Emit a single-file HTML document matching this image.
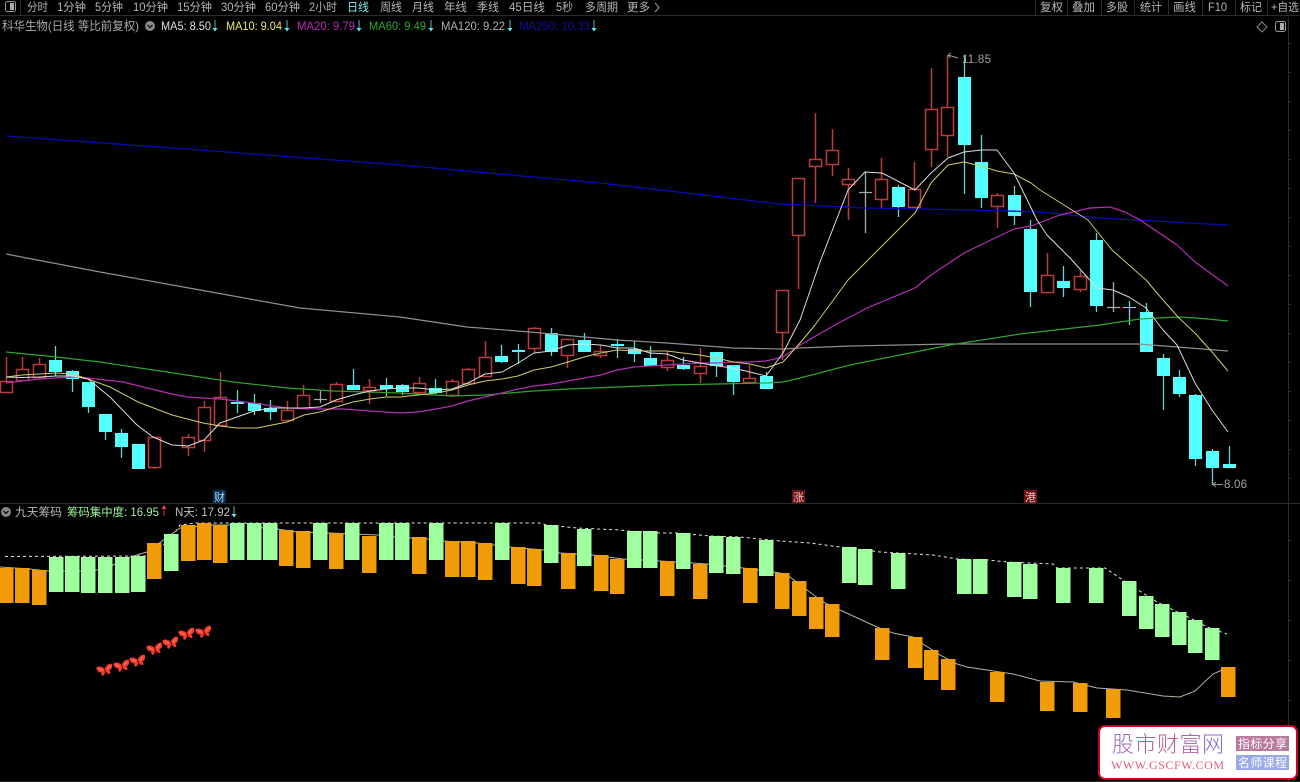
<!DOCTYPE html>
<html><head><meta charset="utf-8"><style>
html,body{margin:0;padding:0;background:#000;width:1300px;height:782px;overflow:hidden}
svg{display:block}
text{font-family:"Liberation Sans","Noto Sans CJK SC",sans-serif;font-size:11.5px}
</style></head><body>
<svg width="1300" height="782" viewBox="0 0 1300 782" xmlns="http://www.w3.org/2000/svg">
<defs>
<linearGradient id="g" x1="0" x2="1" y1="0" y2="0"><stop offset="0" stop-color="#8a70c8"/><stop offset=".4" stop-color="#c05a90"/><stop offset=".7" stop-color="#b060a8"/><stop offset="1" stop-color="#7a70d0"/></linearGradient>
<g id="bf"><path d="M0-1C-2-5-7-6-8-4C-8-1-7 1-4 1.500C-5 3-5 5-3.500 5C-2 5-1 3 0 1.500C1 3 2 5 3.500 5C5 5 5 3 4 1.500C7 1 8-1 8-4C7-6 2-5 0-1Z" fill="#f23c2c"/><path d="M-6-3L-2 0M6-3L2 0" stroke="#ff9080" stroke-width=".8"/><path d="M0-1V3" stroke="#600" stroke-width="1"/></g>
</defs>
<rect width="1300" height="782" fill="#000"/>

<!-- frame lines -->
<path d="M0 15.500H1300M0 503.500H1300M0 781.500H1300M1288.500 17V781M20.500 0V15M1035.500 0V15M1067.500 0V15M1101.500 0V15M1134.500 0V15M1168.500 0V15M1202.500 0V15M1235.500 0V15M1267.500 0V15" stroke="#2c2c2c" fill="none"/>
<path d="M1288 43.500h3M1288 72.500h3M1288 101.500h3M1288 130.500h3M1288 159.500h3M1288 188.500h3M1288 217.500h3M1288 246.500h3M1288 275.500h3M1288 304.500h3M1288 333.500h3M1288 362.500h3M1288 391.500h3M1288 420.500h3M1288 449.500h3M1288 478.500h3M1288 540.500h3M1288 580.500h3M1288 620.500h3M1288 660.500h3M1288 700.500h3" stroke="#333"/>

<!-- top-left icon -->
<rect x="5.500" y="1.500" width="10" height="10" rx="2" fill="none" stroke="#999"/><rect x="10" y="3" width="4" height="7" fill="#aaa"/>

<!-- tabs -->
<g fill="#b4b4b4" style="font-size:11.500px">
<text x="27" y="11" textLength="21" lengthAdjust="spacingAndGlyphs">分时</text>
<text x="57" y="11" textLength="29" lengthAdjust="spacingAndGlyphs">1分钟</text>
<text x="95" y="11" textLength="28" lengthAdjust="spacingAndGlyphs">5分钟</text>
<text x="133" y="11" textLength="35" lengthAdjust="spacingAndGlyphs">10分钟</text>
<text x="177" y="11" textLength="35" lengthAdjust="spacingAndGlyphs">15分钟</text>
<text x="221" y="11" textLength="35" lengthAdjust="spacingAndGlyphs">30分钟</text>
<text x="265" y="11" textLength="35" lengthAdjust="spacingAndGlyphs">60分钟</text>
<text x="309" y="11" textLength="28" lengthAdjust="spacingAndGlyphs">2小时</text>
<text x="347" y="11" textLength="22" fill="#7fe6e6" lengthAdjust="spacingAndGlyphs">日线</text>
<text x="380" y="11" textLength="22" lengthAdjust="spacingAndGlyphs">周线</text>
<text x="412" y="11" textLength="22" lengthAdjust="spacingAndGlyphs">月线</text>
<text x="444" y="11" textLength="23" lengthAdjust="spacingAndGlyphs">年线</text>
<text x="477" y="11" textLength="22" lengthAdjust="spacingAndGlyphs">季线</text>
<text x="509" y="11" textLength="36" lengthAdjust="spacingAndGlyphs">45日线</text>
<text x="556" y="11" textLength="17" lengthAdjust="spacingAndGlyphs">5秒</text>
<text x="585" y="11" textLength="33" lengthAdjust="spacingAndGlyphs">多周期</text>
<text x="627" y="11" textLength="23" lengthAdjust="spacingAndGlyphs">更多</text>
<text x="1040" y="11" textLength="23" lengthAdjust="spacingAndGlyphs">复权</text>
<text x="1072" y="11" textLength="23" lengthAdjust="spacingAndGlyphs">叠加</text>
<text x="1106" y="11" textLength="22" lengthAdjust="spacingAndGlyphs">多股</text>
<text x="1140" y="11" textLength="22" lengthAdjust="spacingAndGlyphs">统计</text>
<text x="1173" y="11" textLength="23" lengthAdjust="spacingAndGlyphs">画线</text>
<text x="1208" y="11" textLength="19" lengthAdjust="spacingAndGlyphs">F10</text>
<text x="1240" y="11" textLength="22" lengthAdjust="spacingAndGlyphs">标记</text>
<text x="1271" y="11" textLength="28" lengthAdjust="spacingAndGlyphs">+自选</text>
</g>
<path d="M655 3L659 7.500L655 12" fill="none" stroke="#999"/>

<!-- title row -->
<text x="2" y="30" textLength="137" fill="#aaa" lengthAdjust="spacingAndGlyphs" style="font-size:12px">科华生物(日线 等比前复权)</text>
<circle cx="150" cy="26" r="5" fill="#888"/><path d="M147.500 25L150 27.500L152.500 25" fill="none" stroke="#111" stroke-width="1.300"/>
<text x="161" y="30" textLength="50" fill="#e0e0e0" lengthAdjust="spacingAndGlyphs">MA5: 8.50</text>
<text x="226" y="30" textLength="56" fill="#e8e878" lengthAdjust="spacingAndGlyphs">MA10: 9.04</text>
<text x="297" y="30" textLength="58" fill="#b82cb8" lengthAdjust="spacingAndGlyphs">MA20: 9.79</text>
<text x="369" y="30" textLength="57" fill="#2ea82e" lengthAdjust="spacingAndGlyphs">MA60: 9.49</text>
<text x="441" y="30" textLength="64" fill="#b0b0b0" lengthAdjust="spacingAndGlyphs">MA120: 9.22</text>
<text x="519" y="30" textLength="71" fill="#0f0fa0" lengthAdjust="spacingAndGlyphs">MA250: 10.33</text>
<path d="M215 20V29M287 20V29M359 20V29M431 20V29M510 20V29M594 20V29" fill="none" stroke="#58b8c0" stroke-width="1"/>
<path d="M212.500 28h5L215 31.500ZM284.500 28h5L287 31.500ZM356.500 28h5L359 31.500ZM428.500 28h5L431 31.500ZM507.500 28h5L510 31.500ZM591.500 28h5L594 31.500Z" fill="#5fe8f4"/>
<path d="M1262 22L1267 27L1262 32L1257 27Z" fill="none" stroke="#888"/>
<rect x="1275.500" y="21.500" width="10" height="10" rx="2" fill="none" stroke="#999"/><rect x="1280" y="23" width="4" height="7" fill="#aaa"/>

<!-- candles: wicks -->
<path fill="none" stroke="#b83e3e" stroke-width="1.500" d="M6.500 357V381M22.500 357V369M39.500 358V364M154.500 467V469M188.500 434V437M188.500 447V456M204.500 401V407M204.500 440V452M220.500 372V397M287.500 401V410M303.500 385V395M336.500 382V384M336.500 401V402M369.500 379V387M369.500 390V404M419.500 377V383M452.500 379V381M452.500 395V397M468.500 368V369M485.500 341V357M534.500 327V328M534.500 348V353M567.500 355V368M600.500 345V351M600.500 355V358M667.500 351V360M667.500 367V371M700.500 348V366M700.500 373V383M749.500 365V378M782.500 332V360M798.500 235V289M815.500 113V159M815.500 166V203M832.500 129V150M832.500 164V176M848.500 168V179M848.500 184V220M881.500 158V179M881.500 199V208M914.500 162V189M914.500 207V208M931.500 68V109M931.500 149V167M947.500 55V107M947.500 135V157M997.500 193V195M997.500 206V228M1047.500 253V275M1080.500 271V276M1080.500 289V292"/>
<path fill="none" stroke="#6fd2d2" stroke-width="1.300" d="M55.500 346V376M72.500 370V392M88.500 407V413M105.500 432V440M121.500 429V458M237.500 390V413M254.500 394V415M270.500 400V420M353.500 369V390M386.500 378V396M402.500 384V395M435.500 379V394M501.500 345V363M518.500 344V364M551.500 328V356M584.500 333V352M617.500 339V358M634.500 341V362M650.500 346V366M683.500 357V370M716.500 352V377M733.500 382V395M766.500 372V389M898.500 185V217M964.500 55V194M981.500 135V208M1014.500 186V225M1030.500 220V307M1063.500 266V297M1096.500 233V312M1129.500 301V325M1146.500 303V352M1163.500 354V410M1179.500 370V397M1195.500 394V466M1212.500 449V485M1229.500 446V468"/>
<path fill="none" stroke="#a8a8a8" stroke-width="1.300" d="M320.500 390V403M314 399.500H327M865.500 172V233M859 192.500H872M1113.500 282V312M1107 307.500H1120"/>
<!-- red bodies -->
<path fill="#000" stroke="#b83e3e" stroke-width="1.500" d="M0.500 381.500h12v11h-12zM16.500 369.500h12v11h-12zM33.500 364.500h12v13h-12zM148.500 437.500h12v30h-12zM182.500 437.500h12v10h-12zM198.500 407.500h12v33h-12zM214.500 397.500h12v28h-12zM281.500 410.500h12v10h-12zM297.500 395.500h12v13h-12zM330.500 384.500h12v17h-12zM363.500 387.500h12v3h-12zM413.500 383.500h12v9h-12zM446.500 381.500h12v14h-12zM462.500 369.500h12v14h-12zM479.500 357.500h12v19h-12zM528.500 328.500h12v20h-12zM561.500 339.500h12v16h-12zM594.500 351.500h12v4h-12zM661.500 360.500h12v7h-12zM694.500 366.500h12v7h-12zM743.500 378.500h12v4h-12zM776.500 290.500h12v42h-12zM792.500 178.500h12v57h-12zM809.500 159.500h12v7h-12zM826.500 150.500h12v14h-12zM842.500 179.500h12v5h-12zM875.500 179.500h12v20h-12zM908.500 189.500h12v18h-12zM925.500 109.500h12v40h-12zM941.500 107.500h12v28h-12zM991.500 195.500h12v11h-12zM1041.500 275.500h12v17h-12zM1074.500 276.500h12v13h-12z"/>
<!-- cyan bodies -->
<path fill="#54ffff" d="M49 360h13v12h-13zM66 371h13v8h-13zM82 382h13v25h-13zM99 414h13v18h-13zM115 433h13v14h-13zM132 444h13v25h-13zM231 402h13v2h-13zM248 403h13v8h-13zM264 408h13v4h-13zM347 385h13v5h-13zM380 385h13v4h-13zM396 385h13v7h-13zM429 388h13v5h-13zM495 356h13v6h-13zM512 350h13v2h-13zM545 333h13v19h-13zM578 340h13v12h-13zM611 344h13v2h-13zM628 349h13v5h-13zM644 358h13v8h-13zM677 365h13v4h-13zM710 352h13v14h-13zM727 365h13v17h-13zM760 376h13v13h-13zM892 187h13v20h-13zM958 77h13v68h-13zM975 162h13v36h-13zM1008 195h13v21h-13zM1024 229h13v63h-13zM1057 281h13v7h-13zM1090 240h13v66h-13zM1123 307h13v1h-13zM1140 312h13v40h-13zM1157 358h13v18h-13zM1173 377h13v17h-13zM1189 395h13v64h-13zM1206 451h13v17h-13zM1223 464h13v4h-13z"/>

<!-- moving averages -->
<g fill="none" stroke-width="1" stroke-linejoin="round">
<polyline stroke="#0a0ab4" stroke-width="1.300" points="6,136 200,150 400,165 600,183 780,204 865,208 973,210 1040,212 1100,218 1207,224 1228,225"/>
<polyline stroke="#8f8f8f" stroke-width="1.200" points="6,254 100,272 200,290 300,308 400,317 467,327 530,332 617,340 667,343 733,348 783,349 800,348 850,346 950,344 1020,344 1138,344 1177,347 1228,351"/>
<polyline stroke="#2fa52f" stroke-width="1.200" points="6,352 56,357 100,362 160,371 233,382 287,388 333,391 367,392 400,393 418,394 452,396 485,395 534,391 568,389 617,387 667,385 717,384 766,383 783,382 800,378 850,365 900,355 950,345 1020,334 1100,325 1140,319 1177,317 1197,318 1228,321"/>
<polyline stroke="#b030b0" stroke-width="1.200" points="6,383 22,381 39,379 56,378 72,377 88,378 123,382 147,388 172,394 187,397 220,399 253,403 287,408 320,409 343,409 370,411 400,413 418,412 436,409 452,406 468,401 485,397 502,393 518,389 534,386 551,384 568,381 584,378 601,375 617,370 634,367 650,366 667,365 683,364 700,363 717,363 733,362 750,362 766,361 783,357 800,345 835,325 867,308 915,288 931,275 964,253 997,237 1014,229 1031,226 1060,215 1090,208 1110,207 1125,212 1140,220 1177,245 1195,262 1228,286"/>
<polyline stroke="#d0cc68" points="6,377 22,375 39,374 56,373 72,374 88,379 110,387 138,402 172,415 203,423 220,426 237,428 257,428 287,422 304,415 320,412 336,407 353,402 370,399 386,397 400,397 418,395 436,393 452,390 468,385 485,381 502,379 518,376 534,370 551,367 568,362 584,357 601,353 617,350 634,351 650,351 667,351 683,353 700,355 717,358 733,362 750,364 766,368 783,362 800,343 815,325 848,280 880,248 915,213 931,183 948,165 964,162 981,166 997,171 1014,174 1031,183 1040,190 1088,220 1112,250 1146,280 1163,300 1179,318 1195,333 1212,352 1228,371"/>
<polyline stroke="#dcdcdc" points="6,377 22,377.5 39,377 56,376 72,376 88,379 110,397 137,425 153,437 172,445 188,446 204,440 220,423 254,411 270,408 287,408 303,408 320,407 336,400 353,395 370,391 386,389 400,388 418,388 436,390 452,389 468,383 485,374 502,372 518,363 534,353 551,351 568,345 584,344 601,345 617,348 634,348 650,353 667,354 683,360 700,363 717,366 733,368 750,372 766,376 783,353 800,320 820,262 848,190 865,172 882,173 915,190 931,173 948,158 964,152 981,150 997,150 1014,173 1037,220 1047,235 1070,258 1097,288 1113,290 1129,297 1146,308 1163,330 1177,345 1195,383 1212,410 1228,432"/>
</g>

<!-- price labels -->
<text x="962" y="63" textLength="29" fill="#a0a0a0">11.85</text>
<path d="M948 55L958 58M948 55L951 53M948 55L950 58" stroke="#999" fill="none"/>
<text x="1224" y="488" textLength="23" fill="#a0a0a0">8.06</text>
<path d="M1213 484.500H1223M1213 484.500L1216 482M1213 484.500L1216 487" stroke="#999" fill="none"/>

<!-- markers -->
<rect x="213" y="490" width="13" height="13" fill="#0a2a55"/><text x="214" y="501" fill="#9fe0f0" style="font-size:11px">财</text>
<rect x="792" y="490" width="13" height="13" fill="#6a1010"/><text x="793" y="501" fill="#f0c0c0" style="font-size:11px">涨</text>
<rect x="1024" y="490" width="13" height="13" fill="#6a1010"/><text x="1025" y="501" fill="#f0c0c0" style="font-size:11px">港</text>

<!-- indicator title -->
<circle cx="6" cy="512" r="5" fill="#888"/><path d="M3.500 511L6 513.500L8.500 511" fill="none" stroke="#111" stroke-width="1.300"/>
<text x="15" y="516" textLength="47" fill="#b8b8b8" lengthAdjust="spacingAndGlyphs">九天筹码</text>
<text x="67" y="516" textLength="92" fill="#a0f0a0" lengthAdjust="spacingAndGlyphs">筹码集中度: 16.95</text>
<path d="M164 507V516" fill="none" stroke="#c04030" stroke-width="1"/><path d="M161.500 509h5L164 505Z" fill="#f04030"/>
<text x="175" y="516" textLength="55" fill="#c0c0c0" lengthAdjust="spacingAndGlyphs">N天: 17.92</text>
<path d="M234 506V515" fill="none" stroke="#58b8c0" stroke-width="1"/><path d="M231.500 514h5L234 517.500Z" fill="#5fe8f4"/>

<!-- indicator lines -->
<polyline fill="none" stroke="#e4e4e4" stroke-dasharray="3 3" points="5,556.500 148,556 170,540 180,525 195,523 540,523 547,525 577,528 620,530 628,531 660,533 677,533 710,536 740,537 760,539 780,541 810,543 840,547 857,549 880,552 933,555 957,559 988,560 1007,562 1053,564 1057,568 1105,568 1123,580 1138,590 1157,602 1173,610 1190,618 1207,627 1227,634"/>
<polyline fill="none" stroke="#a8b8a0" points="0,567 30,569 47,571 80,571 97,570 113,565 130,557 147,552 180,528 213,525 233,525 245,523 263,528 277,529 297,532 330,533 378,535 395,537 427,539 443,541 477,543 510,547 543,550 560,553 593,555 623,559 660,561 693,563 707,564 743,568 773,572 780,573 790,577 807,590 823,602 840,610 877,627 893,633 913,637 923,644 940,655 957,664 967,667 1013,674 1040,681 1073,682 1097,688 1127,690 1163,696 1180,697 1195,691 1213,674 1222,670"/>

<!-- indicator bars -->
<path fill="#f09c08" d="M-1 568h14.500v35h-14.500zM15 568h14.500v35h-14.500zM32 570h14.500v35h-14.500zM147 543h14.500v36h-14.500zM181 525h14.500v36h-14.500zM197 523h14.500v37h-14.500zM213 525h14.500v38h-14.500zM279 530h14.500v36h-14.500zM296 531h14.500v37h-14.500zM329 533h14.500v36h-14.500zM362 536h14.500v37h-14.500zM412 537h14.500v37h-14.500zM445 541h14.500v36h-14.500zM461 541h14.500v36h-14.500zM478 543h14.500v37h-14.500zM511 547h14.500v37h-14.500zM527 549h14.500v37h-14.500zM561 553h14.500v36h-14.500zM594 555h14.500v36h-14.500zM610 559h14.500v35h-14.500zM660 561h14.500v35h-14.500zM693 564h14.500v35h-14.500zM743 568h14.500v35h-14.500zM775 573h14.500v36h-14.500zM792 581h14.500v35h-14.500zM809 597h14.500v32h-14.500zM825 604h14.500v33h-14.500zM875 628h14.500v32h-14.500zM908 637h14.500v31h-14.500zM924 650h14.500v30h-14.500zM941 659h14.500v31h-14.500zM990 672h14.500v30h-14.500zM1040 682h14.500v29h-14.500zM1073 683h14.500v29h-14.500zM1106 689h14.500v29h-14.500zM1221 667h14.500v30h-14.500z"/>
<path fill="#9fff9f" d="M49 557h14.500v35h-14.500zM65 556h14.500v36h-14.500zM81 557h14.500v36h-14.500zM98 557h14.500v36h-14.500zM115 557h14.500v36h-14.500zM131 556h14.500v36h-14.500zM164 534h14.500v37h-14.500zM230 523h14.500v37h-14.500zM247 523h14.500v37h-14.500zM263 523h14.500v37h-14.500zM313 523h14.500v37h-14.500zM345 523h14.500v37h-14.500zM379 523h14.500v37h-14.500zM395 523h14.500v37h-14.500zM429 523h14.500v37h-14.500zM495 523h14.500v37h-14.500zM544 525h14.500v38h-14.500zM577 529h14.500v37h-14.500zM627 531h14.500v37h-14.500zM643 531h14.500v37h-14.500zM676 533h14.500v36h-14.500zM709 536h14.500v37h-14.500zM726 537h14.500v37h-14.500zM759 540h14.500v36h-14.500zM842 547h14.500v36h-14.500zM858 549h14.500v36h-14.500zM891 553h14.500v36h-14.500zM957 559h14.500v35h-14.500zM973 559h14.500v35h-14.500zM1007 562h14.500v35h-14.500zM1023 564h14.500v35h-14.500zM1056 568h14.500v35h-14.500zM1089 568h14.500v35h-14.500zM1122 581h14.500v35h-14.500zM1139 596h14.500v33h-14.500zM1155 604h14.500v33h-14.500zM1172 612h14.500v33h-14.500zM1188 620h14.500v33h-14.500zM1205 628h14.500v32h-14.500z"/>

<!-- butterflies -->
<use href="#bf" transform="translate(105 670) rotate(-14)"/>
<use href="#bf" transform="translate(122 666) rotate(-14)"/>
<use href="#bf" transform="translate(138 661) rotate(-14)"/>
<use href="#bf" transform="translate(155 649) rotate(-14)"/>
<use href="#bf" transform="translate(171 643) rotate(-14)"/>
<use href="#bf" transform="translate(187 634) rotate(-14)"/>
<use href="#bf" transform="translate(204 632) rotate(-14)"/>

<!-- logo -->
<rect x="1099" y="726" width="198" height="53" rx="6" fill="#fff" stroke="#d4001a" stroke-width="2"/>
<text x="1112" y="752" textLength="112" fill="url(#g)" style="font-size:22px;font-family:'Noto Sans CJK SC',sans-serif;font-weight:300">股市财富网</text>
<text x="1111" y="769" textLength="113" fill="#e0607c" style="font-family:'Liberation Serif',serif;font-size:12px">WWW.GSCFW.COM</text>
<rect x="1236" y="736" width="53" height="15" fill="#b87a9e"/>
<text x="1238" y="748" textLength="49" fill="#fff" style="font-size:12px">指标分享</text>
<rect x="1236" y="755" width="53" height="15" fill="#98a8e8"/>
<text x="1238" y="767" textLength="49" fill="#fff" style="font-size:12px">名师课程</text>
</svg>
</body></html>
